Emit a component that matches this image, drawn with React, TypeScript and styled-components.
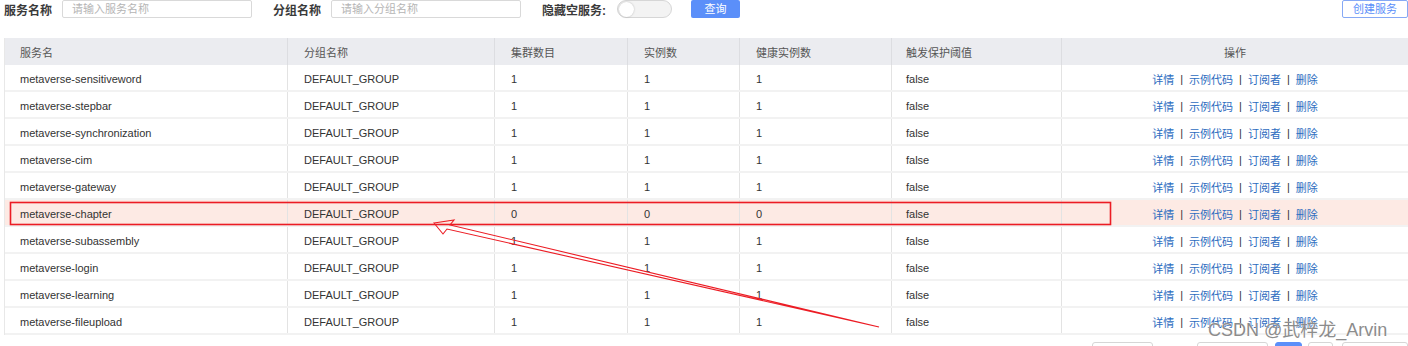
import React from "react";
import styled, { createGlobalStyle } from "styled-components";

const GlobalStyle = createGlobalStyle`
  html, body {
    margin: 0;
    padding: 0;
    background: #ffffff;
  }
  body {
    font-family: "Liberation Sans", "Noto Sans CJK SC", sans-serif;
    color: #333;
  }
`;

const Page = styled.div`
  position: relative;
  width: 1408px;
  height: 346px;
  overflow: hidden;
  background: #fff;
`;

const Toolbar = styled.div`
  display: flex;
  align-items: center;
  height: 18px;
  padding-left: 4px;
`;

const FilterItem = styled.div`
  display: flex;
  align-items: center;
  margin-right: 21px;
`;

const Label = styled.span`
  font-size: 12px;
  font-weight: 600;
  color: #3a3a3a;
  margin-right: 10px;
  white-space: nowrap;
`;

const Input = styled.div`
  box-sizing: border-box;
  width: 190px;
  height: 18px;
  border: 1px solid #d9d9d9;
  border-radius: 2px;
  padding-left: 9px;
  font-size: 11px;
  line-height: 16px;
  color: #b5b5b5;
`;

const Switch = styled.div`
  box-sizing: border-box;
  width: 55px;
  height: 18px;
  border: 1px solid #d6d6d6;
  border-radius: 9px;
  background: #f3f3f3;
  display: flex;
  align-items: center;
  padding-left: 1px;
`;

const Knob = styled.div`
  width: 15px;
  height: 15px;
  border-radius: 50%;
  background: #fff;
  box-shadow: 0 0 2px rgba(0, 0, 0, 0.25);
`;

const QueryButton = styled.div`
  width: 49px;
  height: 18px;
  margin-left: 19px;
  border-radius: 2px;
  background: #5b8ff9;
  color: #fff;
  font-size: 11px;
  line-height: 18px;
  text-align: center;
`;

const CreateButton = styled.div`
  box-sizing: border-box;
  margin-left: auto;
  width: 66px;
  height: 18px;
  border: 1px solid #86a9f5;
  border-radius: 2px;
  color: #5b8ff9;
  font-size: 11px;
  line-height: 16px;
  text-align: center;
`;

const Table = styled.div`
  margin: 20px 0 0 4px;
  width: 1404px;
  border-left: 1px solid #e8e8e8;
  box-sizing: border-box;
`;

const cols = "283px 207px 133px 112px 152px 170px 346px";

const HeaderRow = styled.div`
  display: grid;
  grid-template-columns: ${cols};
  height: 27px;
  background: #ebecf0;
`;

const Row = styled.div<{ $hl?: boolean }>`
  display: grid;
  grid-template-columns: ${cols};
  height: 27px;
  box-sizing: border-box;
  border-bottom: 2px solid #f2f2f2;
  background: ${(p) => (p.$hl ? "#fdeae4" : "#fff")};
`;

const Cell = styled.div<{ $center?: boolean; $pad?: number }>`
  display: flex;
  align-items: center;
  justify-content: ${(p) => (p.$center ? "center" : "flex-start")};
  padding-left: ${(p) => (p.$center ? 0 : p.$pad ?? 16)}px;
  padding-top: 2px;
  font-size: 11px;
  color: #333;
  white-space: nowrap;
  border-right: 1px solid #e3e3e3;
  &:last-child {
    border-right: none;
  }
`;

const HeadCell = styled(Cell)`
  color: #555;
  padding-top: 0;
  border-right-color: #dcdde1;
`;

const Link = styled.span`
  color: #2d6cc0;
`;

const Sep = styled.span`
  color: #333;
  margin: 0 6px;
`;

const Pager = styled.div`
  display: flex;
  justify-content: flex-end;
  align-items: flex-start;
  margin-top: 7px;
`;

const PageBox = styled.div<{ $w: number; $active?: boolean; $gap: number }>`
  box-sizing: border-box;
  width: ${(p) => p.$w}px;
  height: 22px;
  margin-left: ${(p) => p.$gap}px;
  border: 1px solid ${(p) => (p.$active ? "#5b8ff9" : "#d6d6d6")};
  border-radius: 3px;
  background: ${(p) => (p.$active ? "#5b8ff9" : "#fff")};
`;

const Overlay = styled.svg`
  position: absolute;
  left: 0;
  top: 0;
  pointer-events: none;
`;

const Watermark = styled.div`
  position: absolute;
  left: 1208px;
  top: 315px;
  font-size: 18px;
  color: #8c8c8c;
  text-shadow: 0 0 1px #fff;
  white-space: nowrap;
`;

const services = [
  "metaverse-sensitiveword",
  "metaverse-stepbar",
  "metaverse-synchronization",
  "metaverse-cim",
  "metaverse-gateway",
  "metaverse-chapter",
  "metaverse-subassembly",
  "metaverse-login",
  "metaverse-learning",
  "metaverse-fileupload",
];

const App = () => {
  return (
    <Page>
      <GlobalStyle />
      <Toolbar>
        <FilterItem>
          <Label>服务名称</Label>
          <Input>请输入服务名称</Input>
        </FilterItem>
        <FilterItem>
          <Label>分组名称</Label>
          <Input>请输入分组名称</Input>
        </FilterItem>
        <FilterItem style={{ marginRight: 0 }}>
          <Label style={{ marginRight: 11 }}>隐藏空服务:</Label>
          <Switch>
            <Knob />
          </Switch>
        </FilterItem>
        <QueryButton>查询</QueryButton>
        <CreateButton>创建服务</CreateButton>
      </Toolbar>

      <Table>
        <HeaderRow>
          <HeadCell $pad={15}>服务名</HeadCell>
          <HeadCell>分组名称</HeadCell>
          <HeadCell>集群数目</HeadCell>
          <HeadCell>实例数</HeadCell>
          <HeadCell>健康实例数</HeadCell>
          <HeadCell $pad={14}>触发保护阈值</HeadCell>
          <HeadCell $center>操作</HeadCell>
        </HeaderRow>
        {services.map((name) => {
          const empty = name === "metaverse-chapter";
          const n = empty ? "0" : "1";
          return (
            <Row key={name} $hl={empty}>
              <Cell $pad={15}>{name}</Cell>
              <Cell>DEFAULT_GROUP</Cell>
              <Cell>{n}</Cell>
              <Cell>{n}</Cell>
              <Cell>{n}</Cell>
              <Cell $pad={14}>false</Cell>
              <Cell $center>
                <Link>详情</Link>
                <Sep>|</Sep>
                <Link>示例代码</Link>
                <Sep>|</Sep>
                <Link>订阅者</Link>
                <Sep>|</Sep>
                <Link>删除</Link>
              </Cell>
            </Row>
          );
        })}
      </Table>

      <Pager>
        <PageBox $w={61} $gap={0} />
        <PageBox $w={71} $gap={44} />
        <PageBox $w={27} $gap={7} $active />
        <PageBox $w={25} $gap={6} />
        <PageBox $w={66} $gap={9} />
      </Pager>

      <Overlay width={1408} height={346} viewBox="0 0 1408 346">
        <rect
          x={10.5}
          y={202.5}
          width={1100}
          height={22}
          fill="none"
          stroke="#ec1c24"
          strokeWidth={1.6}
        />
        <polygon
          points="434,223 454,220 450,225 879,327 447,229 443,234"
          fill="none"
          stroke="#ec1c24"
          strokeWidth={1.1}
          strokeLinejoin="miter"
        />
      </Overlay>

      <Watermark>CSDN @武梓龙_Arvin</Watermark>
    </Page>
  );
};

export default App;
